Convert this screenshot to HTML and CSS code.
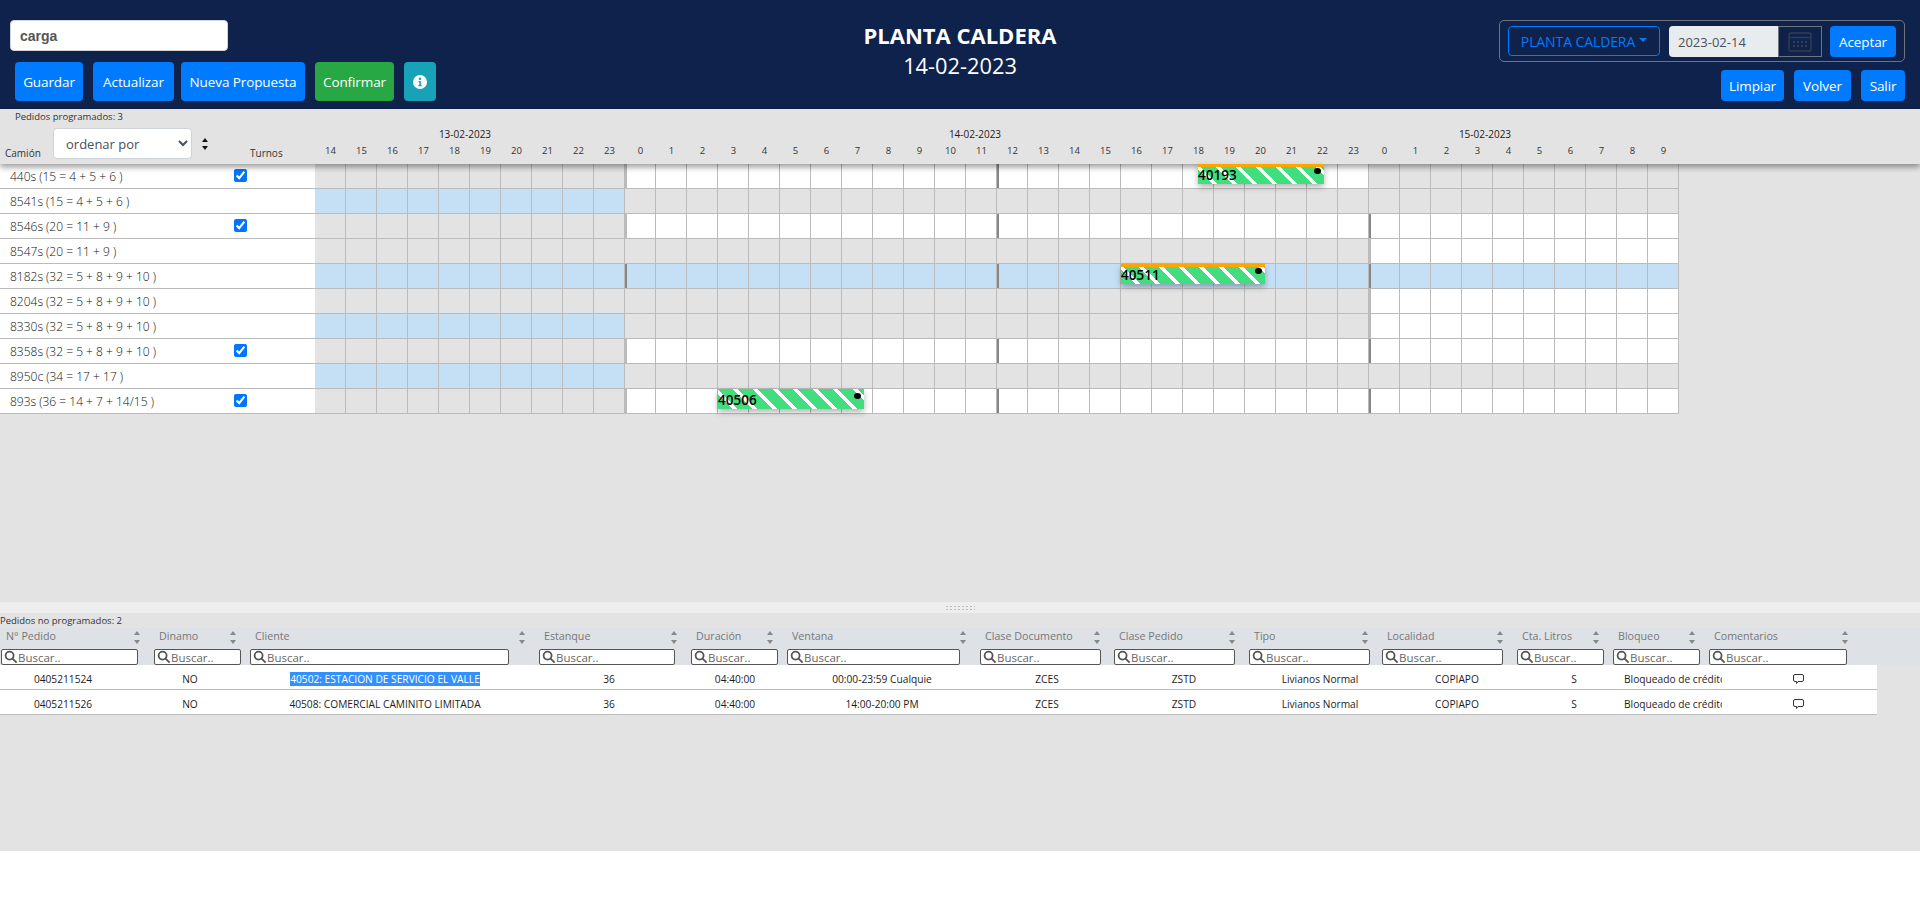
FILE: index.html
```html
<!DOCTYPE html>
<html lang="es">
<head>
<meta charset="utf-8">
<title>Planta Caldera</title>
<link rel="stylesheet" href="styles.css">
</head>
<body>
<header class="topbar">
  <div class="top-left">
    <input class="search-main" type="text" value="carga">
    <div class="actions">
      <button class="btn blue w-guardar">Guardar</button>
      <button class="btn blue w-actualizar">Actualizar</button>
      <button class="btn blue w-nueva">Nueva Propuesta</button>
      <button class="btn green w-confirmar">Confirmar</button>
      <button class="btn teal w-info" aria-label="info">
        <svg width="14" height="14" viewBox="0 0 14 14"><circle cx="7" cy="7" r="7" fill="#fff"/><circle cx="7" cy="3.7" r="1.3" fill="#17a2b8"/><path d="M5.6 6h2.3v4h.8v1.2H5.4V10h.9V7.2h-.7z" fill="#17a2b8"/></svg>
      </button>
    </div>
  </div>
  <div class="top-title">
    <h1 class="title">PLANTA CALDERA</h1>
    <div class="subtitle">14-02-2023</div>
  </div>
  <div class="top-right">
    <div class="filter-box">
      <button class="dropdown">PLANTA CALDERA<span class="caret"></span></button>
      <div class="date-group">
        <input class="date-input" type="text" value="2023-02-14" readonly>
        <span class="date-icon">
          <svg width="24" height="20" viewBox="0 0 24 20" fill="none"><rect x="1" y="1" width="22" height="18" rx="2" stroke="#343e50" stroke-width="1.4"/><path d="M1 5.500h22" stroke="#343e50" stroke-width="1.4"/><g fill="#343e50"><rect x="5" y="9" width="2" height="2"/><rect x="9" y="9" width="2" height="2"/><rect x="13" y="9" width="2" height="2"/><rect x="17" y="9" width="2" height="2"/><rect x="5" y="13" width="2" height="2"/><rect x="9" y="13" width="2" height="2"/><rect x="13" y="13" width="2" height="2"/><rect x="17" y="13" width="2" height="2"/></g></svg>
        </span>
      </div>
      <button class="btn blue small w-aceptar">Aceptar</button>
    </div>
    <div class="nav-actions">
      <button class="btn blue small w-limpiar">Limpiar</button>
      <button class="btn blue small w-volver">Volver</button>
      <button class="btn blue small w-salir">Salir</button>
    </div>
  </div>
</header>

<section class="planner">
  <div class="planner-head">
    <div class="head-left">
      <div class="count">Pedidos programados: 3</div>
      <div class="head-controls">
        <span class="head-label camion">Camión</span>
        <select class="order"><option>ordenar por</option></select>
        <span class="sorter"><i class="up"></i><i class="down"></i></span>
        <span class="head-label turnos">Turnos</span>
      </div>
    </div>
    <div class="head-time">
      <div class="dates"><span>13-02-2023</span><span>14-02-2023</span><span>15-02-2023</span></div>
      <div class="hours">
        <span>14</span><span>15</span><span>16</span><span>17</span><span>18</span><span>19</span><span>20</span><span>21</span><span>22</span><span>23</span>
        <span>0</span><span>1</span><span>2</span><span>3</span><span>4</span><span>5</span><span>6</span><span>7</span><span>8</span><span>9</span><span>10</span><span>11</span><span>12</span><span>13</span><span>14</span><span>15</span><span>16</span><span>17</span><span>18</span><span>19</span><span>20</span><span>21</span><span>22</span><span>23</span>
        <span>0</span><span>1</span><span>2</span><span>3</span><span>4</span><span>5</span><span>6</span><span>7</span><span>8</span><span>9</span>
      </div>
    </div>
  </div>

  <div class="rows">
    <div class="row">
      <div class="truck"><span class="truck-name">440s (15 = 4 + 5 + 6 )</span><input class="turn" type="checkbox" checked></div>
      <div class="days">
        <div class="seg s10 gray"></div><div class="seg s24 white a-light m-dark"></div><div class="seg s10 gray"></div>
        <div class="bar late" style="left:883px;width:126px"><span class="bar-id">40193</span><i class="dot"></i></div>
      </div>
    </div>
    <div class="row">
      <div class="truck"><span class="truck-name">8541s (15 = 4 + 5 + 6 )</span></div>
      <div class="days"><div class="seg s10 blue-cell"></div><div class="seg s24 gray"></div><div class="seg s10 gray"></div></div>
    </div>
    <div class="row">
      <div class="truck"><span class="truck-name">8546s (20 = 11 + 9 )</span><input class="turn" type="checkbox" checked></div>
      <div class="days"><div class="seg s10 gray"></div><div class="seg s24 white a-light m-dark"></div><div class="seg s10 white a-dark"></div></div>
    </div>
    <div class="row">
      <div class="truck"><span class="truck-name">8547s (20 = 11 + 9 )</span></div>
      <div class="days"><div class="seg s10 gray"></div><div class="seg s24 gray"></div><div class="seg s10 white a-light"></div></div>
    </div>
    <div class="row">
      <div class="truck"><span class="truck-name">8182s (32 = 5 + 8 + 9 + 10 )</span></div>
      <div class="days">
        <div class="seg s10 blue-cell"></div><div class="seg s24 blue-cell a-dark m-dark"></div><div class="seg s10 blue-cell a-dark"></div>
        <div class="bar late" style="left:806px;width:144px"><span class="bar-id">40511</span><i class="dot"></i></div>
      </div>
    </div>
    <div class="row">
      <div class="truck"><span class="truck-name">8204s (32 = 5 + 8 + 9 + 10 )</span></div>
      <div class="days"><div class="seg s10 gray"></div><div class="seg s24 gray"></div><div class="seg s10 white a-light"></div></div>
    </div>
    <div class="row">
      <div class="truck"><span class="truck-name">8330s (32 = 5 + 8 + 9 + 10 )</span></div>
      <div class="days"><div class="seg s10 blue-cell"></div><div class="seg s24 gray"></div><div class="seg s10 white a-light"></div></div>
    </div>
    <div class="row">
      <div class="truck"><span class="truck-name">8358s (32 = 5 + 8 + 9 + 10 )</span><input class="turn" type="checkbox" checked></div>
      <div class="days"><div class="seg s10 gray"></div><div class="seg s24 white a-light m-dark"></div><div class="seg s10 white a-dark"></div></div>
    </div>
    <div class="row">
      <div class="truck"><span class="truck-name">8950c (34 = 17 + 17 )</span></div>
      <div class="days"><div class="seg s10 blue-cell"></div><div class="seg s24 gray"></div><div class="seg s10 gray"></div></div>
    </div>
    <div class="row">
      <div class="truck"><span class="truck-name">893s (36 = 14 + 7 + 14/15 )</span><input class="turn" type="checkbox" checked></div>
      <div class="days">
        <div class="seg s10 gray"></div><div class="seg s24 white a-light m-dark"></div><div class="seg s10 white a-dark"></div>
        <div class="bar" style="left:403px;width:146px"><span class="bar-id">40506</span><i class="dot"></i></div>
      </div>
    </div>
  </div>
</section>

<div class="splitter"><span class="grip"></span></div>

<section class="orders">
  <div class="count-bottom">Pedidos no programados: 2</div>
  <div class="orders-head">
    <div class="th"><div class="th-top"><span>N° Pedido</span><span class="sorter soft"><i class="up"></i><i class="down"></i></span></div><label class="find w137"><svg class="lens" viewBox="0 0 14 14"><circle cx="5.6" cy="5.6" r="4" /><path d="M8.6 8.6l4 4"/></svg><input placeholder="Buscar.."></label></div>
    <div class="th"><div class="th-top"><span>Dinamo</span><span class="sorter soft"><i class="up"></i><i class="down"></i></span></div><label class="find w86"><svg class="lens" viewBox="0 0 14 14"><circle cx="5.6" cy="5.6" r="4" /><path d="M8.6 8.6l4 4"/></svg><input placeholder="Buscar.."></label></div>
    <div class="th"><div class="th-top"><span>Cliente</span><span class="sorter soft"><i class="up"></i><i class="down"></i></span></div><label class="find w259"><svg class="lens" viewBox="0 0 14 14"><circle cx="5.6" cy="5.6" r="4" /><path d="M8.6 8.6l4 4"/></svg><input placeholder="Buscar.."></label></div>
    <div class="th"><div class="th-top"><span>Estanque</span><span class="sorter soft"><i class="up"></i><i class="down"></i></span></div><label class="find w136"><svg class="lens" viewBox="0 0 14 14"><circle cx="5.6" cy="5.6" r="4" /><path d="M8.6 8.6l4 4"/></svg><input placeholder="Buscar.."></label></div>
    <div class="th"><div class="th-top"><span>Duración</span><span class="sorter soft"><i class="up"></i><i class="down"></i></span></div><label class="find w86"><svg class="lens" viewBox="0 0 14 14"><circle cx="5.6" cy="5.6" r="4" /><path d="M8.6 8.6l4 4"/></svg><input placeholder="Buscar.."></label></div>
    <div class="th"><div class="th-top"><span>Ventana</span><span class="sorter soft"><i class="up"></i><i class="down"></i></span></div><label class="find w173"><svg class="lens" viewBox="0 0 14 14"><circle cx="5.6" cy="5.6" r="4" /><path d="M8.6 8.6l4 4"/></svg><input placeholder="Buscar.."></label></div>
    <div class="th"><div class="th-top"><span>Clase Documento</span><span class="sorter soft"><i class="up"></i><i class="down"></i></span></div><label class="find w120"><svg class="lens" viewBox="0 0 14 14"><circle cx="5.6" cy="5.6" r="4" /><path d="M8.6 8.6l4 4"/></svg><input placeholder="Buscar.."></label></div>
    <div class="th"><div class="th-top"><span>Clase Pedido</span><span class="sorter soft"><i class="up"></i><i class="down"></i></span></div><label class="find w120"><svg class="lens" viewBox="0 0 14 14"><circle cx="5.6" cy="5.6" r="4" /><path d="M8.6 8.6l4 4"/></svg><input placeholder="Buscar.."></label></div>
    <div class="th"><div class="th-top"><span>Tipo</span><span class="sorter soft"><i class="up"></i><i class="down"></i></span></div><label class="find w120"><svg class="lens" viewBox="0 0 14 14"><circle cx="5.6" cy="5.6" r="4" /><path d="M8.6 8.6l4 4"/></svg><input placeholder="Buscar.."></label></div>
    <div class="th"><div class="th-top"><span>Localidad</span><span class="sorter soft"><i class="up"></i><i class="down"></i></span></div><label class="find w120"><svg class="lens" viewBox="0 0 14 14"><circle cx="5.6" cy="5.6" r="4" /><path d="M8.6 8.6l4 4"/></svg><input placeholder="Buscar.."></label></div>
    <div class="th"><div class="th-top"><span>Cta. Litros</span><span class="sorter soft"><i class="up"></i><i class="down"></i></span></div><label class="find w86"><svg class="lens" viewBox="0 0 14 14"><circle cx="5.6" cy="5.6" r="4" /><path d="M8.6 8.6l4 4"/></svg><input placeholder="Buscar.."></label></div>
    <div class="th"><div class="th-top"><span>Bloqueo</span><span class="sorter soft"><i class="up"></i><i class="down"></i></span></div><label class="find w86"><svg class="lens" viewBox="0 0 14 14"><circle cx="5.6" cy="5.6" r="4" /><path d="M8.6 8.6l4 4"/></svg><input placeholder="Buscar.."></label></div>
    <div class="th th-last"><div class="th-top"><span>Comentarios</span><span class="sorter soft"><i class="up"></i><i class="down"></i></span></div><label class="find w138"><svg class="lens" viewBox="0 0 14 14"><circle cx="5.6" cy="5.6" r="4" /><path d="M8.6 8.6l4 4"/></svg><input placeholder="Buscar.."></label></div>
  </div>
  <div class="order-row">
    <span>0405211524</span><span>NO</span><span><span class="selected">40502: ESTACION DE SERVICIO EL VALLE</span></span><span>36</span><span>04:40:00</span><span>00:00-23:59 Cualquie</span><span>ZCES</span><span>ZSTD</span><span>Livianos Normal</span><span>COPIAPO</span><span>S</span><span class="block-cell">Bloqueado de crédito</span>
    <span class="note"><svg width="11" height="10" viewBox="0 0 11 10" fill="none"><path d="M2 .5h7A1.500 1.500 0 0 1 10.500 2v4A1.500 1.500 0 0 1 9 7.500H5L3.500 9.500V7.500H2A1.500 1.500 0 0 1 .5 6V2A1.500 1.500 0 0 1 2 .5z" stroke="#333"/></svg></span>
  </div>
  <div class="order-row">
    <span>0405211526</span><span>NO</span><span>40508: COMERCIAL CAMINITO LIMITADA</span><span>36</span><span>04:40:00</span><span>14:00-20:00 PM</span><span>ZCES</span><span>ZSTD</span><span>Livianos Normal</span><span>COPIAPO</span><span>S</span><span class="block-cell">Bloqueado de crédito</span>
    <span class="note"><svg width="11" height="10" viewBox="0 0 11 10" fill="none"><path d="M2 .5h7A1.500 1.500 0 0 1 10.500 2v4A1.500 1.500 0 0 1 9 7.500H5L3.500 9.500V7.500H2A1.500 1.500 0 0 1 .5 6V2A1.500 1.500 0 0 1 2 .5z" stroke="#333"/></svg></span>
  </div>
</section>
</body>
</html>
```

FILE: styles.css
```css
* { box-sizing: border-box; }
html, body { margin: 0; padding: 0; height: 916px; overflow: hidden; background: #fff; }
body { font-family: "Open Sans", "Noto Sans", sans-serif; color: #212529; }
button, input, select { font-family: inherit; }

/* top bar */
.topbar { height: 109px; background: #0e224b; display: grid; grid-template-columns: 1fr auto 1fr; }
.top-left { padding: 20px 0 0 10px; }
.search-main { display: block; width: 218px; height: 31px; border: 1px solid #ced4da; border-radius: 4px; padding: 0 9px; font-family: "Liberation Sans", Arial, sans-serif; font-size: 14px; font-weight: 700; color: #555; background: #fff; outline: 0; }
.actions { display: flex; gap: 10px; margin: 11px 0 0 5px; }
.btn { border: 1px solid transparent; border-radius: 4px; color: #fff; font-size: 13.5px; padding: 0; height: 39px; display: inline-flex; align-items: center; justify-content: center; letter-spacing: -.1px; }
.btn.small { height: 31px; font-size: 13.5px; }
.blue { background: #007bff; }
.green { background: #28a745; }
.teal { background: #17a2b8; }
.w-guardar { width: 68px; }
.w-actualizar { width: 81px; margin-right: -3px; }
.w-nueva { width: 124px; }
.w-confirmar { width: 79px; }
.w-info { width: 32px; }
.w-aceptar { width: 66px; }
.w-limpiar { width: 63px; }
.w-volver { width: 57px; }
.w-salir { width: 44px; }
.top-title { text-align: center; color: #fff; padding-top: 21px; }
.title { margin: 0; font-size: 22px; line-height: 29px; font-weight: 700; }
.subtitle { font-size: 21.8px; line-height: 27px; margin-top: 2px; }
.top-right { display: flex; flex-direction: column; align-items: flex-end; padding: 20px 15px 0 0; }
.filter-box { width: 406px; height: 42px; border: 1px solid #6c757d; border-radius: 5px; display: flex; align-items: flex-start; padding: 5px 8px; }
.dropdown { width: 152px; height: 30px; background: transparent; border: 1px solid #007bff; border-radius: 4px; color: #007bff; font-size: 14px; padding: 0; display: flex; align-items: center; justify-content: center; letter-spacing: -.1px; }
.caret { width: 0; height: 0; margin-left: 4px; margin-top: -3px; border-left: 4.5px solid transparent; border-right: 4.5px solid transparent; border-top: 4.5px solid #007bff; }
.date-group { display: flex; margin-left: 9px; height: 31px; }
.date-input { width: 109px; height: 31px; border: 0; border-radius: 4px 0 0 4px; background: #e9ecef; color: #495057; font-size: 13px; padding: 0 9px; outline: 0; }
.date-icon { width: 44px; height: 31px; border: 1px solid #6c757d; display: flex; align-items: center; justify-content: center; }
.w-aceptar { margin-left: 8px; }
.nav-actions { display: flex; gap: 10px; margin-top: 8px; }

/* planner */
.planner { height: 493px; background: #e3e3e3; }
.planner-head { height: 55px; display: flex; position: relative; z-index: 2; background: #e3e3e3; box-shadow: 0 3px 6px rgba(0, 0, 0, .4); }
.head-left { width: 315px; flex: none; }
.count { padding-left: 15px; font-size: 9.5px; line-height: 16px; color: #333; height: 19px; }
.head-controls { display: flex; height: 36px; align-items: flex-end; }
.head-label { font-size: 10px; line-height: 12px; color: #333; padding-bottom: 5px; }
.camion { width: 53px; padding-left: 5px; }
.order { width: 139px; height: 31px; align-self: flex-start; background: #fff; border: 1px solid #ced4da; border-radius: 4px; font-size: 13px; color: #495057; padding: 0 8px; outline: 0; }
.sorter { display: flex; flex-direction: column; gap: 4px; width: 6px; }
.sorter i { display: block; width: 0; height: 0; border-left: 3px solid transparent; border-right: 3px solid transparent; }
.sorter .up { border-bottom: 4px solid #111; }
.sorter .down { border-top: 4px solid #111; }
.head-controls .sorter { margin-left: 10px; align-self: flex-start; margin-top: 10px; }
.turnos { margin-left: 42px; }
.head-time { padding-top: 18px; }
.dates { display: grid; grid-template-columns: 300px 720px 300px; font-size: 10px; line-height: 14px; text-align: center; color: #222; }
.hours { display: grid; grid-template-columns: repeat(44, 31px); margin-top: 3px; font-size: 9.5px; line-height: 14px; text-align: center; color: #333; }

.row { width: 1679px; height: 25px; display: flex; border-bottom: 1px solid #bbb; }
.truck { width: 315px; flex: none; height: 24px; background: #fff; display: flex; align-items: flex-start; }
.truck-name { width: 234px; padding-left: 10px; font-size: 12px; font-weight: 300; line-height: 25px; color: #111; white-space: nowrap; }
.turn { width: 13px; height: 13px; margin: 5px 0 0; accent-color: #0075ff; }
.days { position: relative; display: flex; width: 1364px; height: 24px; }
.seg { --a: transparent; --m: transparent; height: 24px; background-image: linear-gradient(var(--a), var(--a)), linear-gradient(var(--m), var(--m)), linear-gradient(90deg, transparent 30px, #bbb 30px); background-size: 2px 100%, 2px 100%, 31px 100%; background-position: 0 0, 372px 0, 0 0; background-repeat: no-repeat, no-repeat, repeat-x; }
.s10 { width: 310px; }
.s24 { width: 744px; }
.gray { background-color: #e3e3e3; }
.white { background-color: #fff; }
.blue-cell { background-color: #c5e0f5; }
.a-light { --a: #bbb; }
.a-dark { --a: #868686; }
.m-dark { --m: #868686; }

.bar { position: absolute; z-index: 3; top: 0; height: 20px; background-color: #41de80; background-image: repeating-linear-gradient(45deg, #41de80 0 10.14px, #fff 10.14px 14.14px); box-shadow: 0 3px 6px rgba(0, 0, 0, .3); }
.late { background-image: linear-gradient(#ffa500, #ffa500), repeating-linear-gradient(45deg, #41de80 0 10.14px, #fff 10.14px 14.14px); background-size: 100% 3px, auto; background-repeat: no-repeat, repeat; }
.bar-id { display: block; font-size: 13.5px; font-weight: 600; line-height: 20px; color: #000; margin-top: 1px; }
.dot { position: absolute; right: 3px; top: 4px; width: 7px; height: 6px; border-radius: 50%; background: #000; }

/* splitter */
.splitter { height: 11px; background: #eee; display: flex; justify-content: center; padding-top: 3px; }
.grip { width: 30px; height: 6px; background-image: radial-gradient(circle, #bbb 1px, transparent 1.1px); background-size: 4px 3px; }

/* orders */
.orders { height: 238px; background: #e3e3e3; }
.count-bottom { font-size: 9.5px; line-height: 15px; color: #333; height: 15px; }
.orders-head { height: 37px; background: #dee2e6; display: grid; grid-template-columns: 153px 96px 289px 152px 96px 193px 134px 135px 133px 135px 96px 96px 169px; }
.th { padding-left: 1px; min-width: 0; }
.th-top { height: 21px; display: flex; justify-content: space-between; align-items: center; padding: 0 13px 2px 5px; font-size: 10.7px; color: #777; white-space: nowrap; }
.th-top > span:first-child { margin-top: -3px; }
.th-last .th-top { padding-right: 29px; }
.sorter.soft { gap: 5px; }
.sorter.soft .up { border-bottom-color: #888; }
.sorter.soft .down { border-top-color: #888; }
.find { display: flex; align-items: center; height: 16px; background: #fff; border: 1px solid #555; border-radius: 2px; overflow: hidden; }
.w86 { width: 87px; }
.w120 { width: 121px; }
.w136 { width: 136px; }
.w137 { width: 137px; }
.w138 { width: 138px; }
.w173 { width: 173px; }
.w259 { width: 259px; }
.lens { width: 14px; height: 14px; flex: none; margin-left: 2px; fill: none; stroke: #555; stroke-width: 1.8; }
.find input { border: 0; padding: 0; margin: 0; height: 14px; min-width: 0; width: 100%; font-size: 11.5px; background: transparent; outline: 0; }
.find input::placeholder { color: #666; opacity: 1; }
.order-row { width: 1877px; height: 25px; background: #fff; border-bottom: 1px solid #bbb; display: grid; grid-template-columns: 126px 128px 262px 186px 66px 228px 102px 172px 100px 174px 60px 118px 155px; font-size: 10.2px; font-weight: 500; line-height: 14px; text-align: center; color: #1c1c1c; padding-top: 7px; white-space: nowrap; }
.order-row > span { min-width: 0; }
.selected { display: inline-block; background: #3390ff; color: #fff; }
.block-cell { text-align: left; padding-left: 20px; overflow: hidden; }
.note { display: block; line-height: 0; margin-top: 2px; padding-right: 3px; }
```
